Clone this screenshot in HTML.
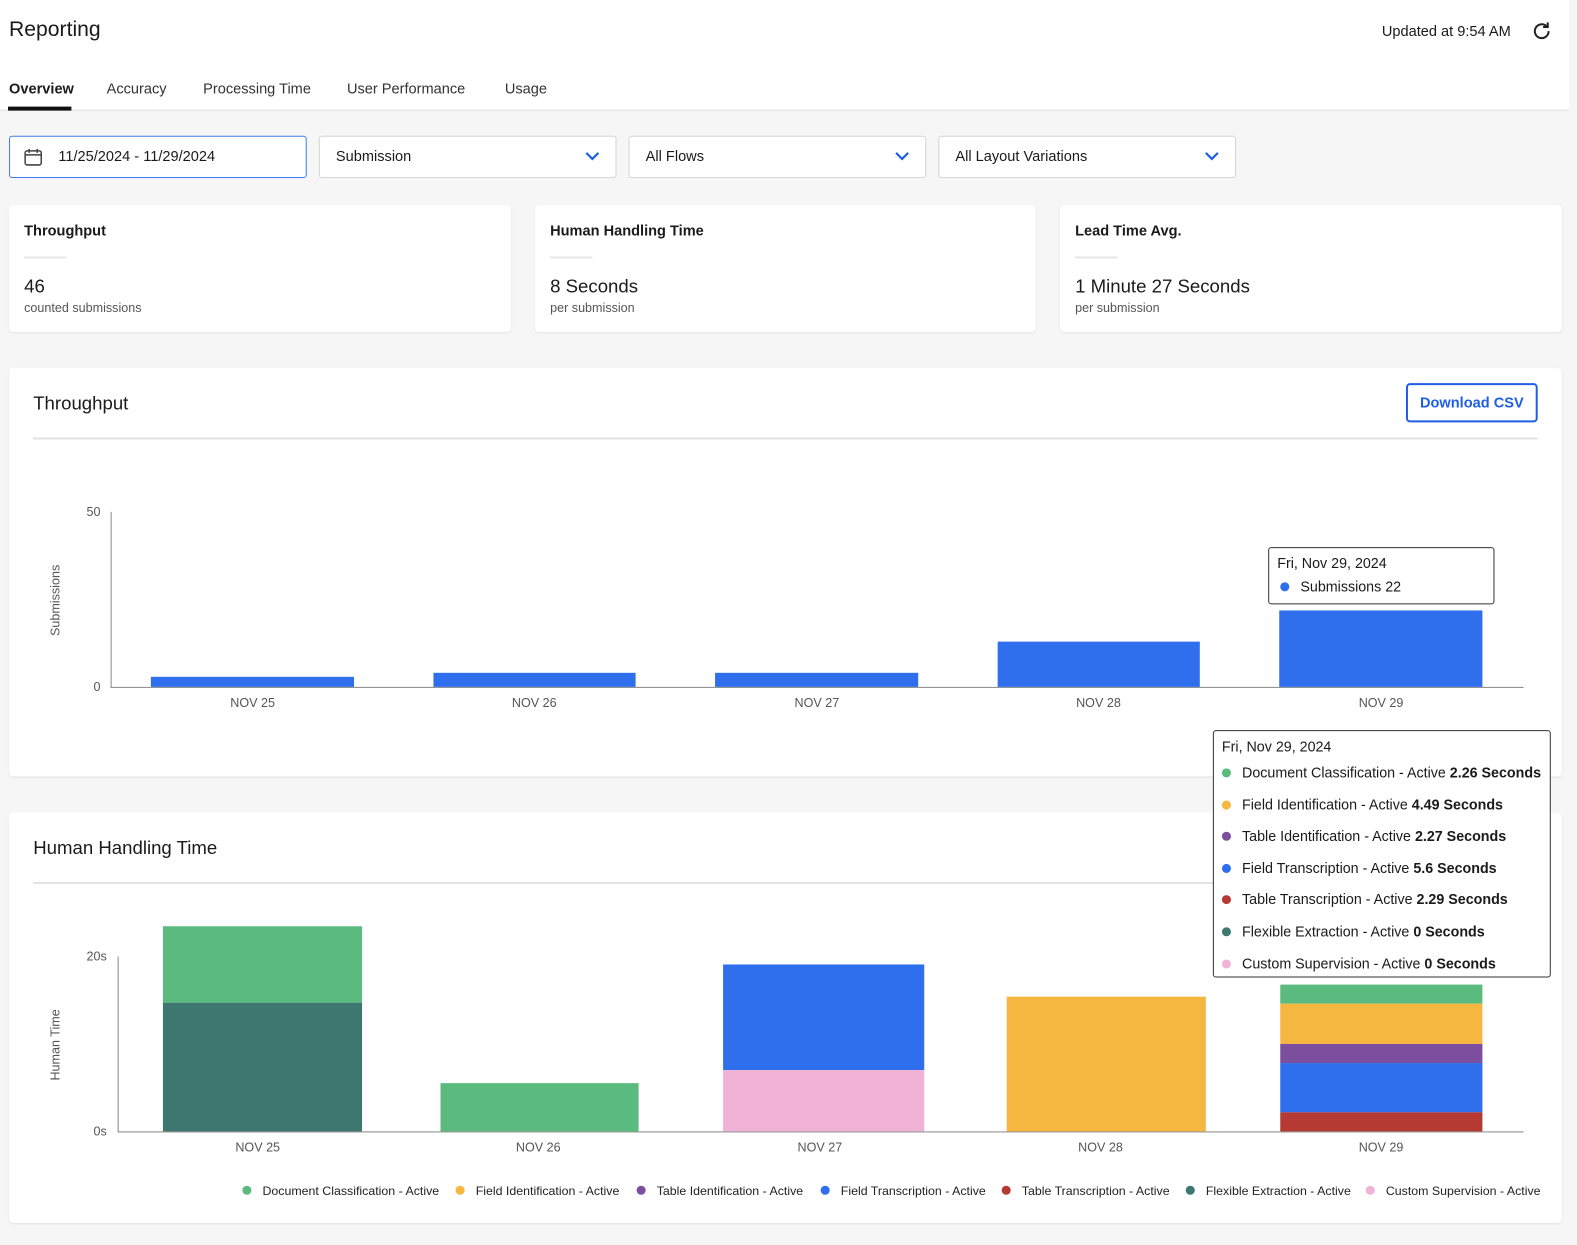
<!DOCTYPE html>
<html><head><meta charset="utf-8"><style>
*{box-sizing:border-box;margin:0;padding:0}
html,body{width:1577px;height:1245px;overflow:hidden}
body{background:#f6f6f6;font-family:"Liberation Sans",sans-serif;color:#1a1a1a}
#w{position:absolute;left:0;top:0;width:1568px;height:1238px;transform:scale(1.0057);transform-origin:0 0}
.a{position:absolute;white-space:nowrap}
.card{position:absolute;background:#fff;border-radius:4px;box-shadow:0 1px 2px rgba(0,0,0,.08)}
.sel{position:absolute;top:135px;height:42px;width:296px;background:#fff;border:1px solid #d4d4d4;border-radius:3px;font-size:14.5px;padding:12px 0 0 16px}
.chev{position:absolute;right:16px;top:14px}
.t{font-size:14.5px;font-weight:bold}
.rule{position:absolute;height:2px;width:42px;background:#e6e6e6}
.big{font-size:18.5px}
.sub{font-size:12.5px;color:#555}
.ax{font-size:12.5px;color:#555}
.dot{display:inline-block;width:9px;height:9px;border-radius:50%;margin-right:11px;vertical-align:0}
.tip{position:absolute;background:#fff;border:1px solid #333;border-radius:3px;font-size:14.2px;white-space:nowrap}
.leg{position:absolute;top:1177px;font-size:12.3px;color:#222;white-space:nowrap}
</style></head><body><div id="w">
<div class="a" style="left:0;top:0;width:1560px;height:110px;background:#fff;border-bottom:1px solid #e4e4e4"></div>
<div class="a" style="left:9px;top:18px;font-size:21px">Reporting</div>
<div class="a" style="left:1374px;top:24px;font-size:14.5px">Updated at 9:54 AM</div>
<svg class="a" style="left:1522px;top:20px" width="22" height="22" viewBox="0 0 24 24" fill="none" stroke="#222" stroke-width="2.2"><path d="M19.5 12a7.5 7.5 0 1 1-2.2-5.3"/><path d="M18.5 2.5v5h-5"/></svg>
<div class="a" style="left:9px;top:81px;font-size:14.5px;font-weight:bold">Overview</div>
<div class="a" style="left:8px;top:106px;width:63px;height:4px;background:#111"></div>
<div class="a" style="left:106px;top:81px;font-size:14.5px;color:#333">Accuracy</div>
<div class="a" style="left:202px;top:81px;font-size:14.5px;color:#333">Processing Time</div>
<div class="a" style="left:345px;top:81px;font-size:14.5px;color:#333">User Performance</div>
<div class="a" style="left:502px;top:81px;font-size:14.5px;color:#333">Usage</div>

<div class="sel" style="left:9px;border-color:#3b7bf0;padding-left:48px">11/25/2024 - 11/29/2024
<svg class="a" style="left:13px;top:10px" width="20" height="20" viewBox="0 0 20 20" fill="none" stroke="#444" stroke-width="1.5"><rect x="2" y="4" width="16" height="14" rx="2"/><path d="M2 8h16M6 2v4M14 2v4"/></svg></div>
<div class="sel" style="left:317px">Submission<svg class="chev" width="14" height="10" viewBox="0 0 14 10"><path d="M1 2l6 6 6-6" fill="none" stroke="#1e5ee6" stroke-width="2.2"/></svg></div>
<div class="sel" style="left:625px">All Flows<svg class="chev" width="14" height="10" viewBox="0 0 14 10"><path d="M1 2l6 6 6-6" fill="none" stroke="#1e5ee6" stroke-width="2.2"/></svg></div>
<div class="sel" style="left:933px">All Layout Variations<svg class="chev" width="14" height="10" viewBox="0 0 14 10"><path d="M1 2l6 6 6-6" fill="none" stroke="#1e5ee6" stroke-width="2.2"/></svg></div>

<div class="card" style="left:9px;top:204px;width:499px;height:126px">
<div class="a t" style="left:15px;top:18px">Throughput</div><div class="rule" style="left:15px;top:51px"></div>
<div class="a big" style="left:15px;top:70px">46</div><div class="a sub" style="left:15px;top:95px">counted submissions</div></div>
<div class="card" style="left:532px;top:204px;width:498px;height:126px">
<div class="a t" style="left:15px;top:18px">Human Handling Time</div><div class="rule" style="left:15px;top:51px"></div>
<div class="a big" style="left:15px;top:70px">8 Seconds</div><div class="a sub" style="left:15px;top:95px">per submission</div></div>
<div class="card" style="left:1054px;top:204px;width:499px;height:126px">
<div class="a t" style="left:15px;top:18px">Lead Time Avg.</div><div class="rule" style="left:15px;top:51px"></div>
<div class="a big" style="left:15px;top:70px">1 Minute 27 Seconds</div><div class="a sub" style="left:15px;top:95px">per submission</div></div>

<div class="card" style="left:9px;top:366px;width:1544px;height:406px"></div>
<div class="a" style="left:33px;top:390px;font-size:18.5px">Throughput</div>
<div class="a" style="left:1398px;top:381px;width:131px;height:39px;border:2px solid #1e5ee6;border-radius:4px;color:#1e5ee6;font-size:14.5px;font-weight:bold;text-align:center;padding-top:10px">Download CSV</div>
<div class="a" style="left:33px;top:435px;width:1496px;height:2px;background:#e2e2e2"></div>
<div class="a" style="left:110px;top:509px;width:1px;height:175px;background:#888"></div>
<div class="a" style="left:110px;top:683px;width:1405px;height:1px;background:#888"></div>
<div class="a ax" style="left:86px;top:502px">50</div><div class="a ax" style="left:93px;top:676px">0</div>
<div class="a ax" style="left:15px;top:590px;transform:rotate(-90deg);width:80px;text-align:center">Submissions</div>
<div class="a" style="left:150px;top:673px;width:202px;height:10px;background:#2f6fed"></div>
<div class="a" style="left:431px;top:669px;width:201px;height:14px;background:#2f6fed"></div>
<div class="a" style="left:711px;top:669px;width:202px;height:14px;background:#2f6fed"></div>
<div class="a" style="left:992px;top:638px;width:201px;height:45px;background:#2f6fed"></div>
<div class="a" style="left:1272px;top:607px;width:202px;height:76px;background:#2f6fed"></div>
<div class="a ax" style="left:229px;top:692px">NOV 25</div><div class="a ax" style="left:509px;top:692px">NOV 26</div><div class="a ax" style="left:790px;top:692px">NOV 27</div><div class="a ax" style="left:1070px;top:692px">NOV 28</div><div class="a ax" style="left:1351px;top:692px">NOV 29</div>
<div class="tip" style="left:1261px;top:544px;width:225px;height:57px;padding:8px 0 0 8px">Fri, Nov 29, 2024<div style="margin-top:7px;margin-left:3px"><span class="dot" style="background:#2f6fed"></span>Submissions 22</div></div>

<div class="card" style="left:9px;top:808px;width:1544px;height:408px"></div>
<div class="a" style="left:33px;top:832px;font-size:18.5px">Human Handling Time</div>
<div class="a" style="left:33px;top:877px;width:1496px;height:2px;background:#e2e2e2"></div>
<div class="a" style="left:117px;top:951px;width:1px;height:175px;background:#888"></div>
<div class="a" style="left:117px;top:1125px;width:1398px;height:1px;background:#888"></div>
<div class="a ax" style="left:86px;top:944px">20s</div><div class="a ax" style="left:93px;top:1118px">0s</div>
<div class="a ax" style="left:15px;top:1032px;transform:rotate(-90deg);width:80px;text-align:center">Human Time</div>
<div class="a" style="left:162px;top:921px;width:198px;height:76px;background:#5bbb7e"></div>
<div class="a" style="left:162px;top:997px;width:198px;height:128px;background:#3d7770"></div>
<div class="a" style="left:438px;top:1077px;width:197px;height:48px;background:#5bbb7e"></div>
<div class="a" style="left:719px;top:959px;width:200px;height:105px;background:#2f6fed"></div>
<div class="a" style="left:719px;top:1064px;width:200px;height:61px;background:#f0b3d6"></div>
<div class="a" style="left:1001px;top:991px;width:198px;height:134px;background:#f5b73f"></div>
<div class="a" style="left:1273px;top:979px;width:201px;height:19px;background:#5bbb7e"></div>
<div class="a" style="left:1273px;top:998px;width:201px;height:40px;background:#f5b73f"></div>
<div class="a" style="left:1273px;top:1038px;width:201px;height:19px;background:#7b4f9e"></div>
<div class="a" style="left:1273px;top:1057px;width:201px;height:49px;background:#2f6fed"></div>
<div class="a" style="left:1273px;top:1106px;width:201px;height:19px;background:#b53a34"></div>
<div class="a ax" style="left:234px;top:1134px">NOV 25</div><div class="a ax" style="left:513px;top:1134px">NOV 26</div><div class="a ax" style="left:793px;top:1134px">NOV 27</div><div class="a ax" style="left:1072px;top:1134px">NOV 28</div><div class="a ax" style="left:1351px;top:1134px">NOV 29</div>

<div class="tip" style="left:1206px;top:726px;width:336px;height:246px;padding:8px 0 0 8px;line-height:31.6px">
<div style="line-height:17px;margin-bottom:2px">Fri, Nov 29, 2024</div>
<div><span class="dot" style="background:#5bbb7e"></span>Document Classification - Active <b>2.26 Seconds</b></div>
<div><span class="dot" style="background:#f5b73f"></span>Field Identification - Active <b>4.49 Seconds</b></div>
<div><span class="dot" style="background:#7b4f9e"></span>Table Identification - Active <b>2.27 Seconds</b></div>
<div><span class="dot" style="background:#2f6fed"></span>Field Transcription - Active <b>5.6 Seconds</b></div>
<div><span class="dot" style="background:#b53a34"></span>Table Transcription - Active <b>2.29 Seconds</b></div>
<div><span class="dot" style="background:#3d7770"></span>Flexible Extraction - Active <b>0 Seconds</b></div>
<div><span class="dot" style="background:#f0b3d6"></span>Custom Supervision - Active <b>0 Seconds</b></div>
</div>

<div class="leg" style="left:241px"><span class="dot" style="background:#5bbb7e"></span>Document Classification - Active</div>
<div class="leg" style="left:453px"><span class="dot" style="background:#f5b73f"></span>Field Identification - Active</div>
<div class="leg" style="left:633px"><span class="dot" style="background:#7b4f9e"></span>Table Identification - Active</div>
<div class="leg" style="left:816px"><span class="dot" style="background:#2f6fed"></span>Field Transcription - Active</div>
<div class="leg" style="left:996px"><span class="dot" style="background:#b53a34"></span>Table Transcription - Active</div>
<div class="leg" style="left:1179px"><span class="dot" style="background:#3d7770"></span>Flexible Extraction - Active</div>
<div class="leg" style="left:1358px"><span class="dot" style="background:#f0b3d6"></span>Custom Supervision - Active</div>
</div></body></html>
